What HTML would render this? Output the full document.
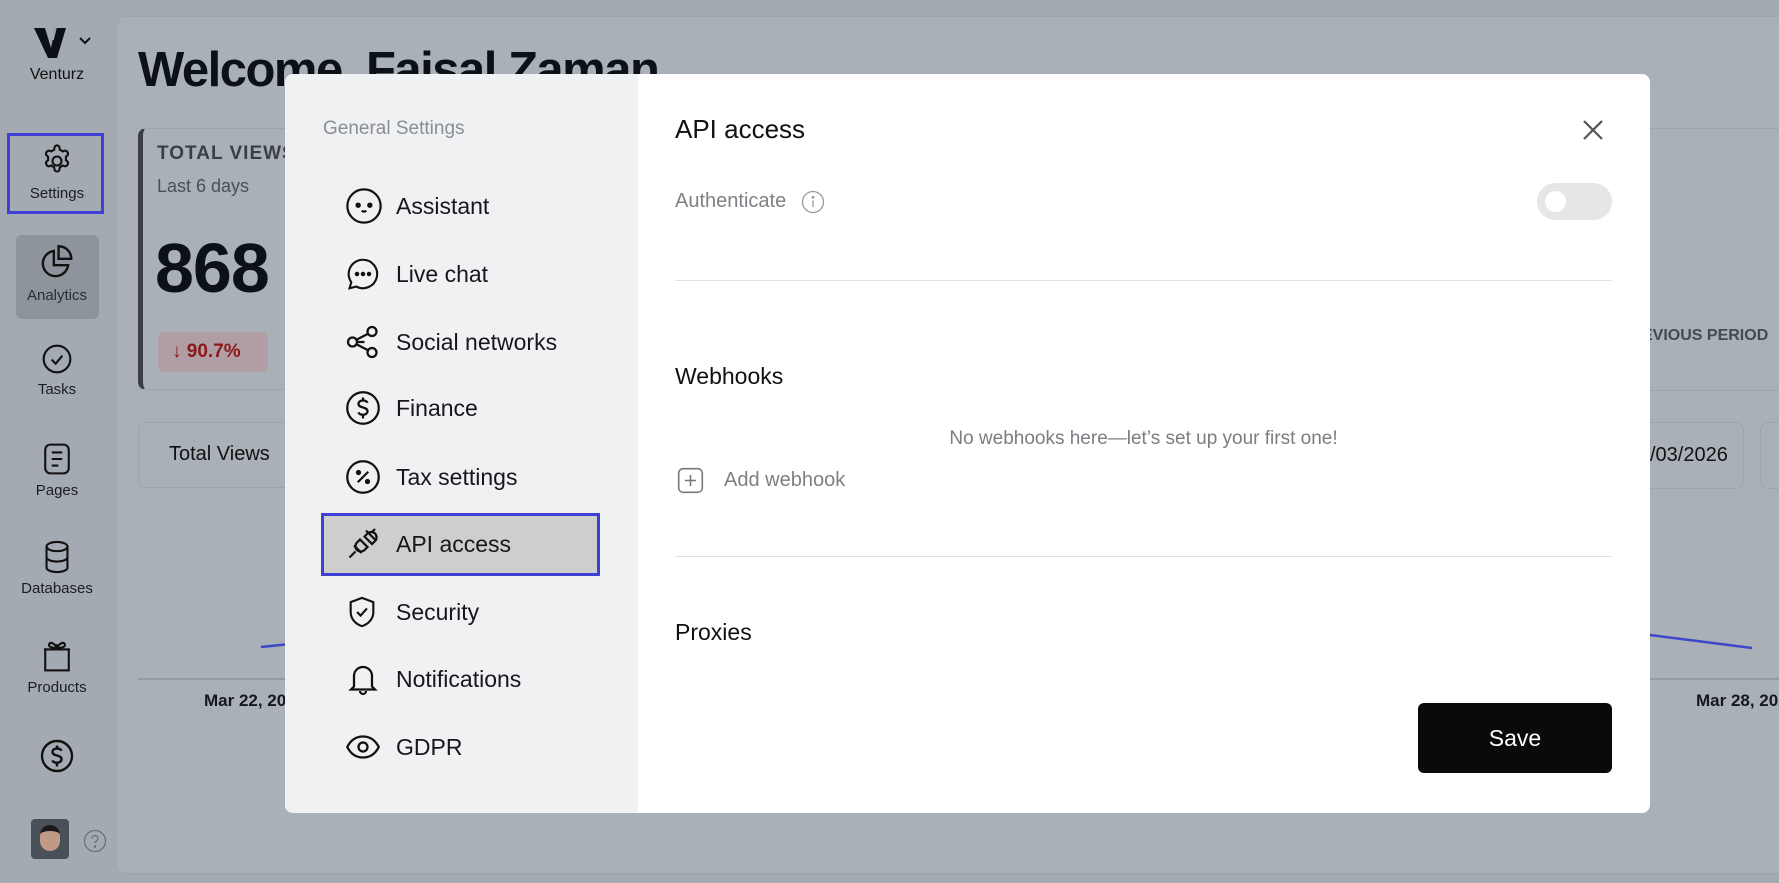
<!DOCTYPE html>
<html><head><meta charset="utf-8"><style>
*{box-sizing:border-box;margin:0;padding:0}
body{width:1779px;height:883px;overflow:hidden;background:#a4aab1;font-family:"Liberation Sans",sans-serif;position:relative;color:#111}
.abs{position:absolute;white-space:nowrap}
.side-item{position:absolute;left:0;width:114px;text-align:center;font-size:15px;color:#1a1d22}
.side-item svg{display:block;margin:0 auto 6px}
.nav{position:absolute;left:345px;height:40px;display:flex;align-items:center;font-size:23px;color:#15171a}
.nav svg{position:absolute;left:0}
.nav span{position:absolute;left:51px;white-space:nowrap}
</style></head><body>
<div class="abs" style="left:116px;top:16px;width:1680px;height:858px;background:#aab0b7;border-radius:10px;border:1px solid #9fa5ac"></div>
<div class="abs" style="left:138px;top:42px;font-size:49px;font-weight:bold;color:#0c1118;letter-spacing:-1.5px">Welcome, Faisal Zaman</div>
<div class="abs" style="left:1650px;top:128px;width:140px;height:1px;background:#9ea4ab"></div>
<div class="abs" style="left:138px;top:128px;width:600px;height:262px;border:1px solid #9ea4ab;border-left:5px solid #3b3f45;border-radius:8px"></div>
<div class="abs" style="left:157px;top:143px;font-size:19px;font-weight:bold;color:#3a3f46;letter-spacing:1px">TOTAL VIEWS</div>
<div class="abs" style="left:157px;top:176px;font-size:18px;color:#4a5058">Last 6 days</div>
<div class="abs" style="left:155px;top:228px;font-size:70px;font-weight:bold;color:#0c1118;letter-spacing:-1px">868</div>
<div class="abs" style="left:158px;top:332px;width:110px;height:40px;background:#b19ea4;border-radius:6px;color:#8a1a1a;font-size:19px;font-weight:bold;line-height:40px;padding-left:14px">↓ 90.7%</div>
<div class="abs" style="left:1642px;top:327px;font-size:16px;font-weight:bold;color:#444a52">EVIOUS PERIOD</div>
<div class="abs" style="left:1650px;top:390px;width:140px;height:1px;background:#9ea4ab"></div>
<div class="abs" style="left:138px;top:422px;width:400px;height:66px;border:1px solid #9ea4ab;border-radius:8px"></div>
<div class="abs" style="left:169px;top:443px;font-size:20px;color:#111">Total Views</div>
<div class="abs" style="left:1560px;top:422px;width:184px;height:67px;border:1px solid #9ea4ab;border-radius:8px"></div>
<div class="abs" style="left:1650px;top:444px;font-size:20px;color:#111">/03/2026</div>
<div class="abs" style="left:1760px;top:422px;width:40px;height:67px;border:1px solid #9ea4ab;border-radius:8px"></div>
<svg class="abs" style="left:0;top:0" width="1779" height="883"><line x1="261" y1="647" x2="290" y2="644" stroke="#3d48c8" stroke-width="2.5"/><line x1="1650" y1="635" x2="1752" y2="648" stroke="#3d48c8" stroke-width="2.5"/><line x1="138" y1="679" x2="300" y2="679" stroke="#8e949b" stroke-width="1.5"/><line x1="1650" y1="679" x2="1779" y2="679" stroke="#8e949b" stroke-width="1.5"/></svg>
<div class="abs" style="left:204px;top:691px;font-size:17px;font-weight:bold;color:#15181d">Mar 22, 2026</div>
<div class="abs" style="left:1696px;top:691px;font-size:17px;font-weight:bold;color:#15181d">Mar 28, 2026</div>

<svg class="abs" style="left:34px;top:28px" width="36" height="30" viewBox="0 0 36 30"><path d="M0 0h11l6 20 4-20h11l-9 30h-9z" fill="#0c1118"/><path d="M22 0l-3 12" stroke="#a4aab1" stroke-width="1.5"/></svg>
<svg class="abs" style="left:78px;top:36px" width="14" height="10"><path d="M2 2l5 5 5-5" fill="none" stroke="#111" stroke-width="2"/></svg>
<div class="abs" style="left:0;width:114px;top:66px;text-align:center;font-size:16px;color:#111">Venturz</div>
<div class="abs" style="left:7px;top:133px;width:97px;height:81px;border:3px solid #4040d6"></div>
<div class="side-item" style="top:143px"><svg width="36" height="36" viewBox="0 0 24 24" fill="none" stroke="#111" stroke-width="1.4"><circle cx="12" cy="12" r="3"/><path d="M10.3 3.3a1.7 1.7 0 0 1 3.4 0l.2 1.2a7.5 7.5 0 0 1 1.9 1.1l1.1-.4a1.7 1.7 0 0 1 2 .8l.2.3a1.7 1.7 0 0 1-.3 2.1l-.9.8a7.5 7.5 0 0 1 0 2.2l.9.8a1.7 1.7 0 0 1 .3 2.1l-.2.3a1.7 1.7 0 0 1-2 .8l-1.1-.4a7.5 7.5 0 0 1-1.9 1.1l-.2 1.2a1.7 1.7 0 0 1-3.4 0l-.2-1.2a7.5 7.5 0 0 1-1.9-1.1l-1.1.4a1.7 1.7 0 0 1-2-.8l-.2-.3a1.7 1.7 0 0 1 .3-2.1l.9-.8a7.5 7.5 0 0 1 0-2.2l-.9-.8a1.7 1.7 0 0 1-.3-2.1l.2-.3a1.7 1.7 0 0 1 2-.8l1.1.4a7.5 7.5 0 0 1 1.9-1.1z"/></svg>Settings</div>
<div class="abs" style="left:16px;top:235px;width:83px;height:84px;background:#8e949b;border-radius:6px"></div>
<div class="side-item" style="top:243px;color:#2a2e34"><svg width="38" height="38" viewBox="0 0 24 24" fill="none" stroke="#111" stroke-width="1.5"><path d="M10 5a8 8 0 1 0 9 9h-9z"/><path d="M13 2a8 8 0 0 1 8 8h-8z"/></svg>Analytics</div>
<div class="side-item" style="top:343px"><svg width="32" height="32" viewBox="0 0 24 24" fill="none" stroke="#111" stroke-width="1.6"><circle cx="12" cy="12" r="10"/><path d="M8 12.5l3 3 5-6"/></svg>Tasks</div>
<div class="side-item" style="top:442px"><svg width="32" height="34" viewBox="0 0 24 26" fill="none" stroke="#111" stroke-width="1.6"><rect x="3" y="2" width="18" height="22" rx="4"/><path d="M8 8h8M8 13h8M8 18h5"/></svg>Pages</div>
<div class="side-item" style="top:540px"><svg width="30" height="34" viewBox="0 0 22 26" fill="none" stroke="#111" stroke-width="1.6"><ellipse cx="11" cy="5" rx="8" ry="3.5"/><path d="M3 5v16c0 2 3.5 3.5 8 3.5s8-1.5 8-3.5V5M3 13c0 2 3.5 3.5 8 3.5s8-1.5 8-3.5"/></svg>Databases</div>
<div class="side-item" style="top:639px"><svg width="32" height="34" viewBox="0 0 24 26" fill="none" stroke="#111" stroke-width="1.6"><rect x="3" y="8" width="18" height="16"/><path d="M2 8h20M12 8V4M12 7c-2-4-5-5-6-3s3 3 6 3c3 0 7-1 6-3s-4-1-6 3"/></svg>Products</div>
<div class="side-item" style="top:738px"><svg width="36" height="36" viewBox="0 0 24 24" fill="none" stroke="#111" stroke-width="1.6"><circle cx="12" cy="12" r="10"/><path d="M15 8.5c-.5-1-1.7-1.5-3-1.5-1.7 0-3 .9-3 2.3 0 3 6 1.7 6 4.8 0 1.4-1.3 2.4-3 2.4-1.4 0-2.6-.6-3.1-1.6M12 5v2M12 17v2"/></svg></div>
<div class="abs" style="left:31px;top:819px;width:38px;height:40px;background:#4a5058;border-radius:4px;overflow:hidden"><div style="margin:6px auto 0;width:20px;height:26px;background:#c09a86;border-radius:10px;border-top:6px solid #1a1a1a"></div></div>
<svg class="abs" style="left:83px;top:829px" width="24" height="24" viewBox="0 0 24 24" fill="none" stroke="#6a7078" stroke-width="1.3"><circle cx="12" cy="12" r="10.5"/><path d="M9 9.5a3 3 0 0 1 6 0c0 2-3 2.5-3 4.5"/><circle cx="12" cy="17.5" r=".6" fill="#6a7078"/></svg>

<div class="abs" style="left:285px;top:74px;width:1365px;height:739px;background:#fff;border-radius:8px;overflow:hidden">
<div class="abs" style="left:0;top:0;width:353px;height:739px;background:#f0f1f3"></div>
</div>
<div class="abs" style="left:323px;top:118px;font-size:19px;color:#8a8d92">General Settings</div>
<div class="abs" style="left:321px;top:513px;width:279px;height:63px;background:#cecece;border:3px solid #4040d0"></div>

<div class="nav" style="top:186px"><svg width="38" height="38" viewBox="0 0 24 24" fill="none" stroke="#111" stroke-width="1.4"><circle cx="12" cy="12" r="10.5"/><circle cx="8.3" cy="11.5" r="1" fill="#111"/><circle cx="15.7" cy="11.5" r="1" fill="#111"/><path d="M10.5 15c1 .7 2 .7 3 0"/></svg><span>Assistant</span></div>
<div class="nav" style="top:254px"><svg width="36" height="36" viewBox="0 0 24 24" fill="none" stroke="#111" stroke-width="1.4"><path d="M12 2.5a9.5 9.5 0 1 1-4.5 17.9L3 21.5l1.2-4A9.5 9.5 0 0 1 12 2.5z"/><circle cx="8" cy="12" r=".8" fill="#111"/><circle cx="12" cy="12" r=".8" fill="#111"/><circle cx="16" cy="12" r=".8" fill="#111"/></svg><span>Live chat</span></div>
<div class="nav" style="top:322px"><svg width="36" height="36" viewBox="0 0 24 24" fill="none" stroke="#111" stroke-width="1.5"><circle cx="18" cy="5" r="3"/><circle cx="5" cy="12" r="3"/><circle cx="18" cy="19" r="3"/><path d="M7.6 10.5l7.8-4M7.6 13.5l7.8 4M8 12h5"/></svg><span>Social networks</span></div>
<div class="nav" style="top:388px"><svg width="36" height="36" viewBox="0 0 24 24" fill="none" stroke="#111" stroke-width="1.5"><circle cx="12" cy="12" r="10.5"/><path d="M15 8.5c-.5-1-1.7-1.5-3-1.5-1.7 0-3 .9-3 2.3 0 3 6 1.7 6 4.8 0 1.4-1.3 2.4-3 2.4-1.4 0-2.6-.6-3.1-1.6M12 5v2M12 17v2"/></svg><span>Finance</span></div>
<div class="nav" style="top:457px"><svg width="36" height="36" viewBox="0 0 24 24" fill="none" stroke="#111" stroke-width="1.5"><circle cx="12" cy="12" r="10.5"/><path d="M8.5 15.5l7-7"/><circle cx="9" cy="9" r="1" fill="#111"/><circle cx="15" cy="15" r="1" fill="#111"/></svg><span>Tax settings</span></div>
<div class="nav" style="top:524px"><svg width="36" height="36" viewBox="0 0 24 24" fill="none" stroke="#111" stroke-width="1.5"><path d="M10 9l5 5-2 2a3.5 3.5 0 0 1-5-5z"/><path d="M13 7l2-2a3.5 3.5 0 0 1 5 5l-2 2zM20 2l-2.5 2.5M7 17l-4 4M6 13l5 5M14 3l7 7"/></svg><span>API access</span></div>
<div class="nav" style="top:592px"><svg width="34" height="36" viewBox="0 0 24 24" fill="none" stroke="#111" stroke-width="1.5"><path d="M12 2l8 3v7c0 5-3.5 8.5-8 10-4.5-1.5-8-5-8-10V5z"/><path d="M8.5 12l2.5 2.5 4.5-5"/></svg><span>Security</span></div>
<div class="nav" style="top:659px"><svg width="36" height="36" viewBox="0 0 24 24" fill="none" stroke="#111" stroke-width="1.5"><path d="M6 17V10a6 6 0 0 1 12 0v7l2 2H4z"/><path d="M10 20a2 2 0 0 0 4 0"/></svg><span>Notifications</span></div>
<div class="nav" style="top:727px"><svg width="36" height="36" viewBox="0 0 24 24" fill="none" stroke="#111" stroke-width="1.5"><path d="M1.5 12C4 7 8 5 12 5s8 2 10.5 7C20 17 16 19 12 19s-8-2-10.5-7z"/><circle cx="12" cy="12" r="3"/></svg><span>GDPR</span></div>

<div class="abs" style="left:675px;top:114px;font-size:26px;color:#111">API access</div>
<svg class="abs" style="left:1581px;top:118px" width="24" height="24"><path d="M3 3l18 18M21 3L3 21" stroke="#555" stroke-width="2.2"/></svg>
<div class="abs" style="left:675px;top:190px;font-size:20px;color:#7d8085">Authenticate</div>
<svg class="abs" style="left:801px;top:190px" width="24" height="24" viewBox="0 0 24 24" fill="none" stroke="#999" stroke-width="1.3"><circle cx="12" cy="12" r="10.5"/><path d="M12 10.5v6.5"/><circle cx="12" cy="7.3" r=".8" fill="#999"/></svg>
<div class="abs" style="left:1537px;top:183px;width:75px;height:37px;background:#e6e6e6;border-radius:19px"><div style="position:absolute;left:8px;top:8px;width:21px;height:21px;border-radius:50%;background:#fff"></div></div>
<div class="abs" style="left:675px;top:280px;width:937px;height:1px;background:#e2e2e2"></div>
<div class="abs" style="left:675px;top:363px;font-size:23px;color:#111">Webhooks</div>
<div class="abs" style="left:675px;top:428px;width:937px;text-align:center;font-size:19px;color:#7a7d82">No webhooks here—let’s set up your first one!</div>
<svg class="abs" style="left:677px;top:467px" width="27" height="27" viewBox="0 0 24 24" fill="none" stroke="#777" stroke-width="1.4"><rect x="1.5" y="1.5" width="21" height="21" rx="4"/><path d="M12 7v10M7 12h10"/></svg>
<div class="abs" style="left:724px;top:469px;font-size:20px;color:#7d8085">Add webhook</div>
<div class="abs" style="left:675px;top:556px;width:937px;height:1px;background:#e2e2e2"></div>
<div class="abs" style="left:675px;top:619px;font-size:23px;color:#111">Proxies</div>
<div class="abs" style="left:1418px;top:703px;width:194px;height:70px;background:#0a0a0a;border-radius:6px;color:#fff;font-size:23px;text-align:center;line-height:70px">Save</div>
</body></html>
